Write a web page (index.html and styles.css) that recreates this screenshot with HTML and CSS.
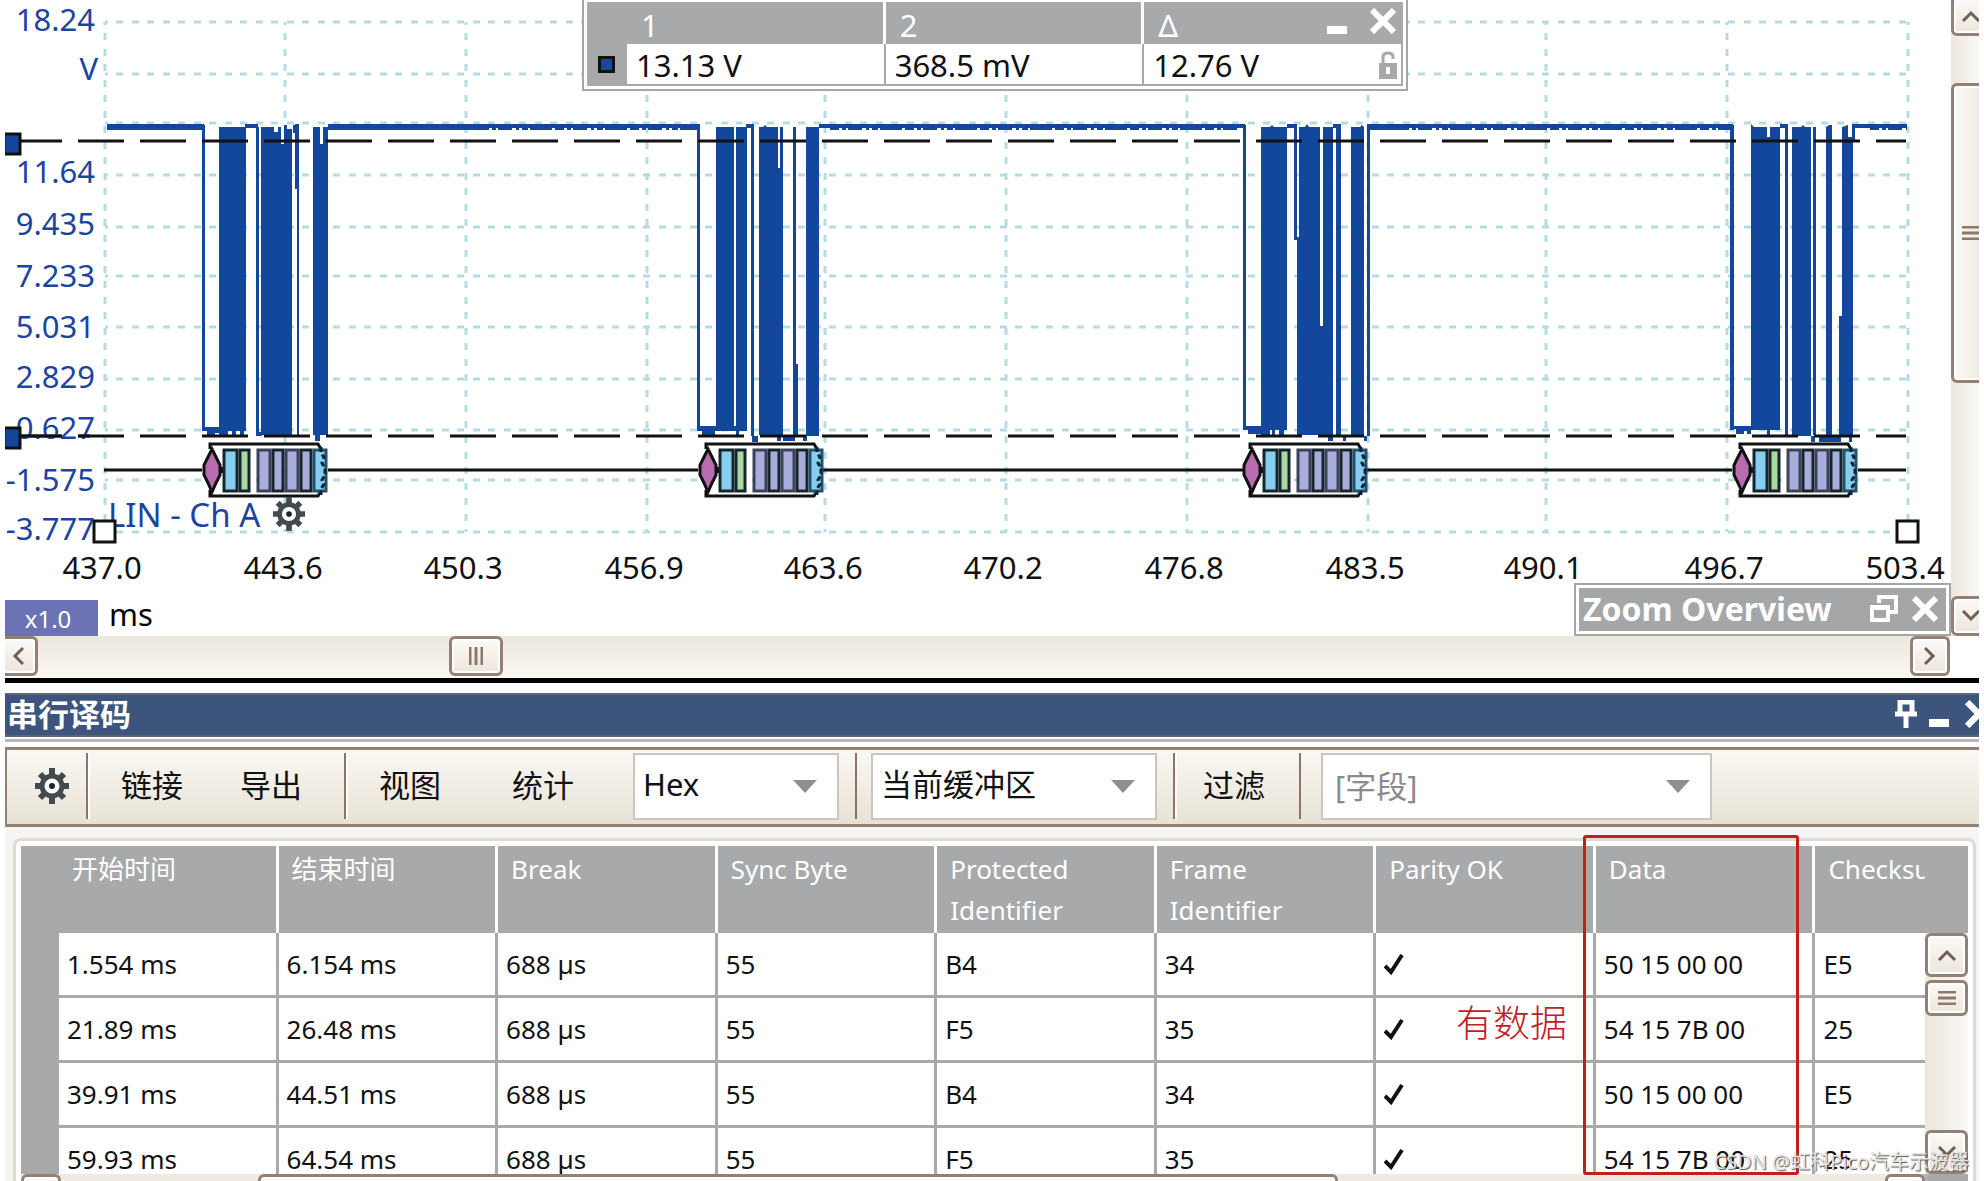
FILE: index.html
```html
<!DOCTYPE html>
<html lang="zh-CN">
<head>
<meta charset="utf-8">
<title>LIN 串行译码</title>
<link rel="stylesheet" href="styles.css">
</head>
<body>
<svg class="defs" aria-hidden="true">
  <defs>
    <symbol id="gear" viewBox="0 0 36 36">
      <g stroke="#444b4f" stroke-width="6" fill="none">
        <path d="M18 0V36M1 18H35M6 6L30 30M30 6L6 30"/>
      </g>
      <circle cx="18" cy="18" r="10" fill="#fff" stroke="#444b4f" stroke-width="5"/>
      <circle cx="18" cy="18" r="3" fill="#222"/>
    </symbol>
    <symbol id="cross" viewBox="0 0 26 26"><path d="M2 2L24 24M24 2L2 24" fill="none" stroke="#fff" stroke-width="6"/></symbol>
    <symbol id="up" viewBox="0 0 20 12"><path d="M2 11L10 3L18 11" fill="none" stroke="#6f5f57" stroke-width="3"/></symbol>
    <symbol id="down" viewBox="0 0 20 12"><path d="M2 1L10 9L18 1" fill="none" stroke="#6f5f57" stroke-width="3"/></symbol>
    <symbol id="left" viewBox="0 0 12 20"><path d="M11 2L3 10L11 18" fill="none" stroke="#6f5f57" stroke-width="3"/></symbol>
    <symbol id="right" viewBox="0 0 12 20"><path d="M1 2L9 10L1 18" fill="none" stroke="#6f5f57" stroke-width="3"/></symbol>
    <symbol id="grip" viewBox="0 0 18 14"><path d="M0 1H18M0 7H18M0 13H18" stroke="#8d786b" stroke-width="3"/></symbol>
    <symbol id="caret" viewBox="0 0 24 13"><path d="M0 0H24L12 13Z" fill="#8d9091"/></symbol>
    <symbol id="packet" viewBox="0 0 130 54" overflow="visible">
      <path d="M8 6V1H116L119 6M8 47V53H116L119 48" fill="none" stroke="#111" stroke-width="3"/>
      <g stroke="#16242b" stroke-width="3">
        <path d="M10 6L14 14L18 22V32L14 40L10 49L6 40L2 32V22L6 14Z" fill="#b96bb0" stroke="#111"/>
        <path d="M18 24V30H22V24Z" fill="#111" stroke="none"/>
        <path d="M22 7H35V48H22Z" fill="#86cef0"/>
        <path d="M38 7H47V48H38Z" fill="#a9d99f"/>
        <path d="M56 7H68V48H56Z" fill="#a8addc" stroke="#3c4358"/>
        <path d="M71 7H81V48H71Z" fill="#a8addc"/>
        <path d="M84 7H96V48H84Z" fill="#a8addc" stroke="#3c4358"/>
        <path d="M99 7H109V48H99Z" fill="#a8addc"/>
        <path d="M112 7H124V48H112Z" fill="#86cef0" stroke="#264f68"/>
      </g>
      <path d="M119 4V10L122 14L120 20L123 25V32L120 37L122 41L119 46V52" fill="none" stroke="#0b2238" stroke-width="3" stroke-dasharray="5 3"/>
    </symbol>
  </defs>
</svg>

<main class="app">
  <section class="scope">
    <div class="plot">
      <svg class="chart" viewBox="5 0 1946 636">
        <g class="grid">
          <path d="M105 22H1908M105 74H1908M105 123H1908M105 175H1908M105 227H1908M105 276H1908M105 327H1908M105 379H1908M105 430H1908M105 480H1908M105 532H1908"/>
          <path d="M105 22V532M285 22V532M466 22V532M647 22V532M825 22V532M1006 22V532M1187 22V532M1368 22V532M1546 22V532M1727 22V532M1908 22V532"/>
        </g>

        <!-- idle level between the bursts -->
        <path class="idle" d="M107 126H204M245 126H258M295 126H299M328 126H700M746 126H754M819 126H1245M1287 126H1297M1333 126H1341M1367 126H1733M1780 126H1788M1852 126H1907"/>
        <path class="ripple" d="M107 129H202M328 129H480M1370 129H1400"/>
        <path class="ripple noisy" d="M480 129H699M830 129H1240M1400 129H1730M1870 129H1907"/>

        <g class="wave">
          <path d="M202 125h3v305h-3zM202 427h17v6h-4v2h-8v-4h-5zM219 127h27v304h-2v4h-4v-4h-4v4h-4v-4h-4v4h-9zM256 127h3v308h-3zM256 432h6v4h-6zM261 127h13v5h4v-5h3v17h3v-19h3v4h5v306h-31zM293 125h6v310h-2v-246h-2v-56h-2zM313 127h7v17h3v-17h5v308h-8v6h-5v-6h-2z"/>
          <path d="M697 125h3v305h-3zM697 426h50v5h-8v4h-3v-4h-21v4h-13v-4h-5zM716 127h18v302h-18zM736 127h11v302h-11zM751 125h3v311h4v6h-6v-6h-1zM759 127h4l2-2l2 2h11v41h2v-41h3v308h-24zM793 127h3v237h2v71h-5zM806 127h13v309h-13zM777 436h4v5h-4zM783 436h12v5h-12zM803 436h4v5h-4z"/>
          <path d="M1243 125h3v305h-3zM1243 426h18v8h-13v-4h-5zM1261 127h9l2-2l2 2h13v303h-3v5h-5v-5h-4v5h-3v-5h-2v5h-9zM1294 125h3v112h2v-110h6l2-3l2 3h11v199h3v-199h10v308h-36v-195h-3zM1336 127h5v308h-5zM1351 127h9l2-2l2 2v308h-13zM1367 125h3v311h-3zM1328 436h5v5h-5zM1343 436h3v5h-3zM1364 436h3v5h-3z"/>
          <path d="M1730 125h4v305h-4zM1731 426h20v8h-4v-3h-3v3h-8v-5h-5zM1751 124l3 3h13v10h3v-10h10v303h-10v5h-3v-5h-16zM1785 125h3v310h-3zM1792 127h9l2-2l2 2h6v309h-19zM1813 127h3v308h-3zM1826 127l3-2h3v310h-6zM1839 316h3v-189l6-2v12h4v-10h3v13h-2v295h-14zM1811 436h4v6h-4zM1819 436h22v6h-22zM1849 436h3v6h-3z"/>
        </g>

        <path class="cursor" d="M16 141H1906M16 436H1906"/>
        <path class="bus" d="M104 470H202M328 470H698M823 470H1243M1366 470H1732M1858 470H1906"/>

        <use href="#packet" x="202" y="443" width="130" height="54"/>
        <use href="#packet" x="698" y="443" width="130" height="54"/>
        <use href="#packet" x="1242" y="443" width="130" height="54"/>
        <use href="#packet" x="1732" y="443" width="130" height="54"/>

        <g class="volts">
          <text x="95" y="31">18.24</text><text x="98" y="80">V</text>
          <text x="95" y="183">11.64</text><text x="95" y="235">9.435</text>
          <text x="95" y="287">7.233</text><text x="95" y="338">5.031</text>
          <text x="95" y="388">2.829</text><text x="95" y="439">0.627</text>
          <text x="95" y="491">-1.575</text><text x="95" y="540">-3.777</text>
        </g>
        <path class="cursor" d="M16 436H90"/>
        <g class="marker"><path d="M4 134H20V154H4Z"/><path d="M4 428H20V448H4Z"/></g>

        <text class="channel" x="108" y="527">LIN - Ch A</text>
        <use href="#gear" x="272" y="497" width="34" height="34"/>
        <g class="handle"><path d="M94 521H115V542H94Z"/><path d="M1897 521H1918V542H1897Z"/></g>

        <g class="times">
          <text x="102" y="579">437.0</text><text x="283" y="579">443.6</text>
          <text x="463" y="579">450.3</text><text x="644" y="579">456.9</text>
          <text x="823" y="579">463.6</text><text x="1003" y="579">470.2</text>
          <text x="1184" y="579">476.8</text><text x="1365" y="579">483.5</text>
          <text x="1543" y="579">490.1</text><text x="1724" y="579">496.7</text>
          <text x="1905" y="579">503.4</text>
        </g>
        <path d="M5 600H98V636H5Z" fill="#6b73b5"/>
        <text class="factor" x="48" y="628">x1.0</text>
        <text class="unit" x="109" y="626">ms</text>
      </svg>

      <div class="float readout">
        <table>
          <colgroup><col class="c-mark"><col><col><col></colgroup>
          <tr><th></th><th class="split">1</th><th class="split">2</th><th>Δ</th></tr>
          <tr>
            <td class="mark"><span class="swatch"></span></td><td>13.13 V</td><td>368.5 mV</td>
            <td><div class="locked">12.76 V
              <svg width="18" height="28" viewBox="0 0 18 28"><path d="M4 13V6Q4 2 9 2T14 6V8" fill="none" stroke="#a6a8aa" stroke-width="3"/><path d="M0 12H18V28H0ZM7 16V23H11V16Z" fill="#a6a8aa" fill-rule="evenodd"/></svg>
            </div></td>
          </tr>
        </table>
        <div class="float-tools">
          <button type="button" aria-label="最小化"><svg width="20" height="26"><path d="M0 18H20V26H0Z" fill="#fff"/></svg></button>
          <button type="button" aria-label="关闭"><svg width="26" height="26"><use href="#cross"/></svg></button>
        </div>
      </div>

      <div class="float overview">
        <div class="overview-bar">
          <span>Zoom Overview</span>
          <button type="button" aria-label="还原"><svg width="28" height="27" viewBox="0 0 28 27"><path d="M2 12H18V25H2ZM2 13H18M9 8V2H26V17H20" fill="none" stroke="#fff" stroke-width="4"/></svg></button>
          <button type="button" aria-label="关闭"><svg width="26" height="26"><use href="#cross"/></svg></button>
        </div>
      </div>
    </div>

    <div class="vscroll">
      <button class="sb sb-up" type="button" aria-label="向上"><svg width="20" height="12"><use href="#up"/></svg></button>
      <button class="sb sb-thumb" type="button" aria-label="垂直滑块"><svg width="18" height="14"><use href="#grip"/></svg></button>
      <button class="sb sb-down" type="button" aria-label="向下"><svg width="20" height="12"><use href="#down"/></svg></button>
    </div>
  </section>

  <div class="hrow">
    <div class="hscroll">
      <button class="sb sb-left" type="button" aria-label="向左"><svg width="12" height="20"><use href="#left"/></svg></button>
      <button class="sb sb-hthumb" type="button" aria-label="水平滑块"><svg width="14" height="18" viewBox="0 0 14 18"><path d="M1 0V18M7 0V18M13 0V18" stroke="#8d786b" stroke-width="3"/></svg></button>
      <button class="sb sb-right" type="button" aria-label="向右"><svg width="12" height="20"><use href="#right"/></svg></button>
    </div>
  </div>

  <section class="decode">
    <header class="titlebar">
      <h1>串行译码</h1>
      <button type="button" aria-label="固定"><svg width="22" height="28" viewBox="0 0 22 28"><path d="M5 14V2H17V14M0 14H22M11 14V28" fill="none" stroke="#fff" stroke-width="5"/></svg></button>
      <button type="button" aria-label="最小化"><svg width="20" height="28"><path d="M0 19H20V27H0Z" fill="#fff"/></svg></button>
      <button class="edge" type="button" aria-label="关闭"><svg width="28" height="28"><use href="#cross"/></svg></button>
    </header>

    <div class="toolbar">
      <button class="tool-gear" type="button" aria-label="设置"><svg width="36" height="36"><use href="#gear"/></svg></button>
      <div class="group group-a"><button type="button">链接</button><button type="button">导出</button></div>
      <div class="group group-b"><button type="button">视图</button><button type="button">统计</button></div>
      <label class="pick pick-format"><select aria-label="格式"><option>Hex</option></select><svg width="24" height="13"><use href="#caret"/></svg></label>
      <span class="rule"></span>
      <label class="pick pick-buffer"><select aria-label="缓冲区"><option>当前缓冲区</option></select><svg width="24" height="13"><use href="#caret"/></svg></label>
      <div class="group group-c"><button type="button">过滤</button></div>
      <label class="pick pick-field"><select aria-label="字段"><option>[字段]</option></select><svg width="24" height="13"><use href="#caret"/></svg></label>
    </div>

    <div class="panel">
      <div class="frame">
        <div class="grid-area">
          <div class="clip">
            <table class="packets">
              <colgroup><col class="c-row"><col><col><col><col><col><col><col><col><col></colgroup>
              <thead>
                <tr><th class="rowhead"></th><th>开始时间</th><th>结束时间</th><th>Break</th><th>Sync Byte</th><th>Protected Identifier</th><th>Frame Identifier</th><th>Parity OK</th><th>Data</th><th>Checksum</th></tr>
              </thead>
              <tbody>
                <tr><th class="rowhead"></th><td>1.554 ms</td><td>6.154 ms</td><td>688 µs</td><td>55</td><td>B4</td><td>34</td><td><svg class="tick" viewBox="0 0 20 22"><path d="M1 13L7 19L18 2" /></svg></td><td>50 15 00 00</td><td>E5</td></tr>
                <tr><th class="rowhead"></th><td>21.89 ms</td><td>26.48 ms</td><td>688 µs</td><td>55</td><td>F5</td><td>35</td><td><svg class="tick" viewBox="0 0 20 22"><path d="M1 13L7 19L18 2" /></svg></td><td>54 15 7B 00</td><td>25</td></tr>
                <tr><th class="rowhead"></th><td>39.91 ms</td><td>44.51 ms</td><td>688 µs</td><td>55</td><td>B4</td><td>34</td><td><svg class="tick" viewBox="0 0 20 22"><path d="M1 13L7 19L18 2" /></svg></td><td>50 15 00 00</td><td>E5</td></tr>
                <tr><th class="rowhead"></th><td>59.93 ms</td><td>64.54 ms</td><td>688 µs</td><td>55</td><td>F5</td><td>35</td><td><svg class="tick" viewBox="0 0 20 22"><path d="M1 13L7 19L18 2" /></svg></td><td>54 15 7B 00</td><td>25</td></tr>
              </tbody>
            </table>
          </div>
          <div class="gscroll">
            <button class="sb" type="button" aria-label="向上"><svg width="20" height="12"><use href="#up"/></svg></button>
            <button class="sb sb-gthumb" type="button" aria-label="滑块"><svg width="18" height="14"><use href="#grip"/></svg></button>
            <button class="sb sb-gdown" type="button" aria-label="向下"><svg width="20" height="12"><use href="#down"/></svg></button>
          </div>
        </div>
        <div class="bottom">
          <button class="sb" type="button" aria-label="向左"></button>
          <button class="sb sb-bthumb" type="button" aria-label="滑块"></button>
          <button class="sb sb-bright" type="button" aria-label="向右"></button>
        </div>
      </div>
      <div class="highlight"></div>
      <p class="note">有数据</p>
      <p class="watermark">CSDN @虹科Pico汽车示波器</p>
    </div>
  </section>
</main>
</body>
</html>
```

FILE: styles.css
```css
* { box-sizing: border-box; }

body {
  margin: 0;
  background: #fff;
  color: #111;
  font-family: "Noto Sans", "Noto Sans CJK SC", sans-serif;
  font-size: 31px;
}

button {
  margin: 0;
  padding: 0;
  border: 0;
  background: none;
  color: inherit;
  font: inherit;
}

svg { display: block; }
table { border-spacing: 0; table-layout: fixed; }
.defs { position: absolute; width: 0; height: 0; }

.app {
  display: flex;
  flex-direction: column;
  height: 100vh;
  padding: 0 5px;
  overflow: hidden;
}

/* waveform view */
.scope { display: flex; flex: none; }
.plot { position: relative; flex: 1; min-width: 0; }
.chart { width: 100%; height: auto; }
.grid path { fill: none; stroke: #b5dce4; stroke-width: 3; stroke-dasharray: 7 8 7 9; stroke-dashoffset: 4; }
.idle { fill: none; stroke: #13479b; stroke-width: 4; }
.ripple { fill: none; stroke: #13479b; stroke-width: 2; }
.noisy { stroke-dasharray: 9 3 4 2 14 4 3 3 6 2 22 3; }
.wave { fill: #13479b; }
.cursor { fill: none; stroke: #111; stroke-width: 3; stroke-dasharray: 46 16; }
.bus { fill: none; stroke: #111; stroke-width: 3; }
.volts { fill: #1c449f; text-anchor: end; }
.times { fill: #111; text-anchor: middle; }
.marker path { fill: #13479b; stroke: #111; stroke-width: 3; }
.handle path { fill: #fff; stroke: #111; stroke-width: 3; }
.channel { fill: #1c449f; font-size: 33px; }
.factor { fill: #fff; font-size: 24px; text-anchor: middle; }

/* floating windows */
.float { position: absolute; padding: 3px; border: 2px solid #a4a6a8; background: #fff; }
.readout { top: -3px; left: 577px; width: 826px; }
.readout table { width: 100%; }
.c-mark { width: 40px; }
.readout th {
  height: 42px;
  padding: 4px 0 0 14px;
  background: #a7a9ab;
  color: #fff;
  font-weight: 400;
  line-height: 38px;
  text-align: left;
}
.readout th.split { border-right: 3px solid #fff; }
.readout td {
  height: 42px;
  padding: 2px 4px 0 9px;
  border: solid #a7a9ab;
  border-width: 0 2px 2px 0;
  line-height: 38px;
}
.readout .mark { background: #a7a9ab; padding: 0 0 0 11px; }
.swatch { display: block; width: 17px; height: 17px; border: 3px solid #111; background: #1b46a5; }
.locked { display: flex; align-items: center; justify-content: space-between; }
.float-tools { position: absolute; top: 9px; right: 10px; display: flex; gap: 23px; }
.overview { right: 0; bottom: 0; width: 377px; }
.overview-bar {
  display: flex;
  align-items: center;
  gap: 14px;
  height: 43px;
  padding: 0 8px 2px 4px;
  background: #a4a6a8;
  color: #fff;
  font-size: 32px;
  font-weight: 700;
  line-height: 41px;
  white-space: nowrap;
}
.overview-bar span { flex: 1; }

/* scroll bars */
.sb {
  display: flex;
  align-items: center;
  justify-content: center;
  flex: none;
  width: 40px;
  height: 40px;
  border: 3px solid #948175;
  border-radius: 6px;
  background: linear-gradient(#fbf9f6, #ece7dc);
  box-shadow: inset 0 0 0 2px #fff;
}
.vscroll {
  display: flex;
  flex-direction: column;
  flex: none;
  width: 28px;
  overflow: hidden;
  background: linear-gradient(90deg, #ece7dc, #faf8f5);
}
.sb-up { height: 40px; margin-top: -4px; }
.sb-thumb { height: 300px; margin-top: 47px; background: linear-gradient(90deg, #fbf9f6, #ece7dc); }
.sb-down { margin-top: auto; }
.hrow { flex: none; padding-right: 29px; border-bottom: 5px solid #000; }
.hscroll { display: flex; height: 42px; overflow: hidden; background: linear-gradient(#ece7dc, #faf8f5); }
.sb-left { margin-left: -7px; }
.sb-hthumb { width: 54px; margin-left: 411px; }
.sb-right { margin-left: auto; }

/* serial decoding */
.decode { display: flex; flex: 1; flex-direction: column; min-height: 0; padding-top: 10px; overflow: hidden; }
.titlebar {
  display: flex;
  align-items: center;
  flex: none;
  gap: 12px;
  height: 44px;
  padding: 0 0 2px 2px;
  border: solid #5f6470;
  border-width: 2px 0;
  background: #3d547c;
  color: #fff;
  overflow: hidden;
}
.titlebar h1 { flex: 1; margin: 0; font-size: 31px; line-height: 38px; }
.titlebar .edge { margin: 0 -14px 0 4px; }
.toolbar {
  display: flex;
  align-items: center;
  flex: none;
  height: 80px;
  margin-top: 10px;
  padding-bottom: 2px;
  border: solid #948175;
  border-width: 3px 0 3px 2px;
  background: linear-gradient(#faf8f4, #e8e2d5);
  box-shadow: 0 -5px 0 #fff, 0 -8px 0 #b4b8bc;
}
.tool-gear { display: flex; align-items: center; justify-content: center; width: 79px; padding-left: 10px; }
.group { display: flex; align-items: center; height: 66px; padding-bottom: 6px; border-left: 2px solid #8d7466; box-shadow: inset 2px 0 0 #fff; }
.group-a { width: 258px; padding-left: 33px; gap: 57px; }
.group-b { width: 289px; padding-left: 33px; gap: 71px; }
.group-c { width: 128px; padding-left: 28px; margin-left: 16px; border-right: 2px solid #8d7466; }
.rule { width: 2px; height: 66px; margin: 0 14px 0 16px; background: #8d7466; }
.pick { position: relative; }
.pick select {
  width: 100%;
  height: 67px;
  padding: 0 40px 4px 8px;
  border: 2px solid #cbc5bf;
  border-radius: 0;
  background: #fff;
  color: #111;
  font: inherit;
  appearance: none;
}
.pick svg { position: absolute; right: 22px; top: 27px; }
.pick-format { width: 206px; }
.pick-buffer { width: 286px; }
.pick-field { width: 391px; margin-left: 20px; }
.pick-field select { padding: 0 40px 0 12px; color: #8b8b8b; }

/* packet table */
.panel { position: relative; flex: 1; min-height: 0; padding: 11px 3px 0 8px; background: #f6f5f4; }
.frame {
  display: flex;
  flex-direction: column;
  height: 100%;
  padding: 5px 5px 0;
  border: solid #e0dad3;
  border-width: 3px 3px 0;
  border-radius: 8px 8px 0 0;
  background: #fff;
}
.grid-area { display: flex; flex: 1; min-height: 0; }
.clip { flex: 1; min-width: 0; overflow: hidden; background: #a7a9ab; }
.packets { width: 2014px; font-size: 26px; }
.c-row { width: 38px; }
.packets th, .packets td { text-align: left; font-weight: 400; }
.packets thead th {
  height: 87px;
  padding: 3px 40px 0 13px;
  border: solid #fff;
  border-width: 0 3px 0 0;
  background: #a7a9ab;
  color: #fff;
  line-height: 41px;
  vertical-align: top;
}
.packets td {
  height: 65px;
  padding: 0 0 0 8px;
  border: solid #a7a9ab;
  border-width: 0 3px 3px 0;
  background: #fff;
  color: #111;
}
.packets th.rowhead { padding: 0; border: 0; background: #a7a9ab; }
.tick { width: 20px; height: 22px; fill: none; stroke: #111; stroke-width: 4; }
.gscroll {
  display: flex;
  flex: none;
  flex-direction: column;
  width: 43px;
  border-top: 87px solid #a7a9ab;
  background: linear-gradient(90deg, #ece7dc, #faf8f5);
}
.gscroll .sb { width: 43px; height: 44px; }
.gscroll .sb-gthumb { height: 36px; margin-top: 3px; }
.gscroll .sb-gdown { margin-top: auto; }
.bottom { display: flex; flex: none; height: 7px; padding-right: 43px; overflow: hidden; background: linear-gradient(90deg, #efeae2 97%, #a7a9ab 98%); }
.sb-bthumb { width: 1080px; margin-left: 197px; }
.sb-bright { margin-left: auto; }

/* annotations over the table */
.highlight { position: absolute; top: 8px; right: 180px; bottom: 6px; width: 216px; border: 3px solid #c0201f; border-radius: 3px; }
.note { position: absolute; top: 169px; right: 412px; margin: 0; color: #c0201f; font-size: 37px; font-weight: 300; line-height: 54px; }
.watermark {
  position: absolute;
  right: 10px;
  bottom: 5px;
  margin: 0;
  color: #e4e4e4;
  font-size: 20px;
  line-height: 28px;
  text-shadow: 1px 1px 1px #555;
  white-space: nowrap;
}
```
